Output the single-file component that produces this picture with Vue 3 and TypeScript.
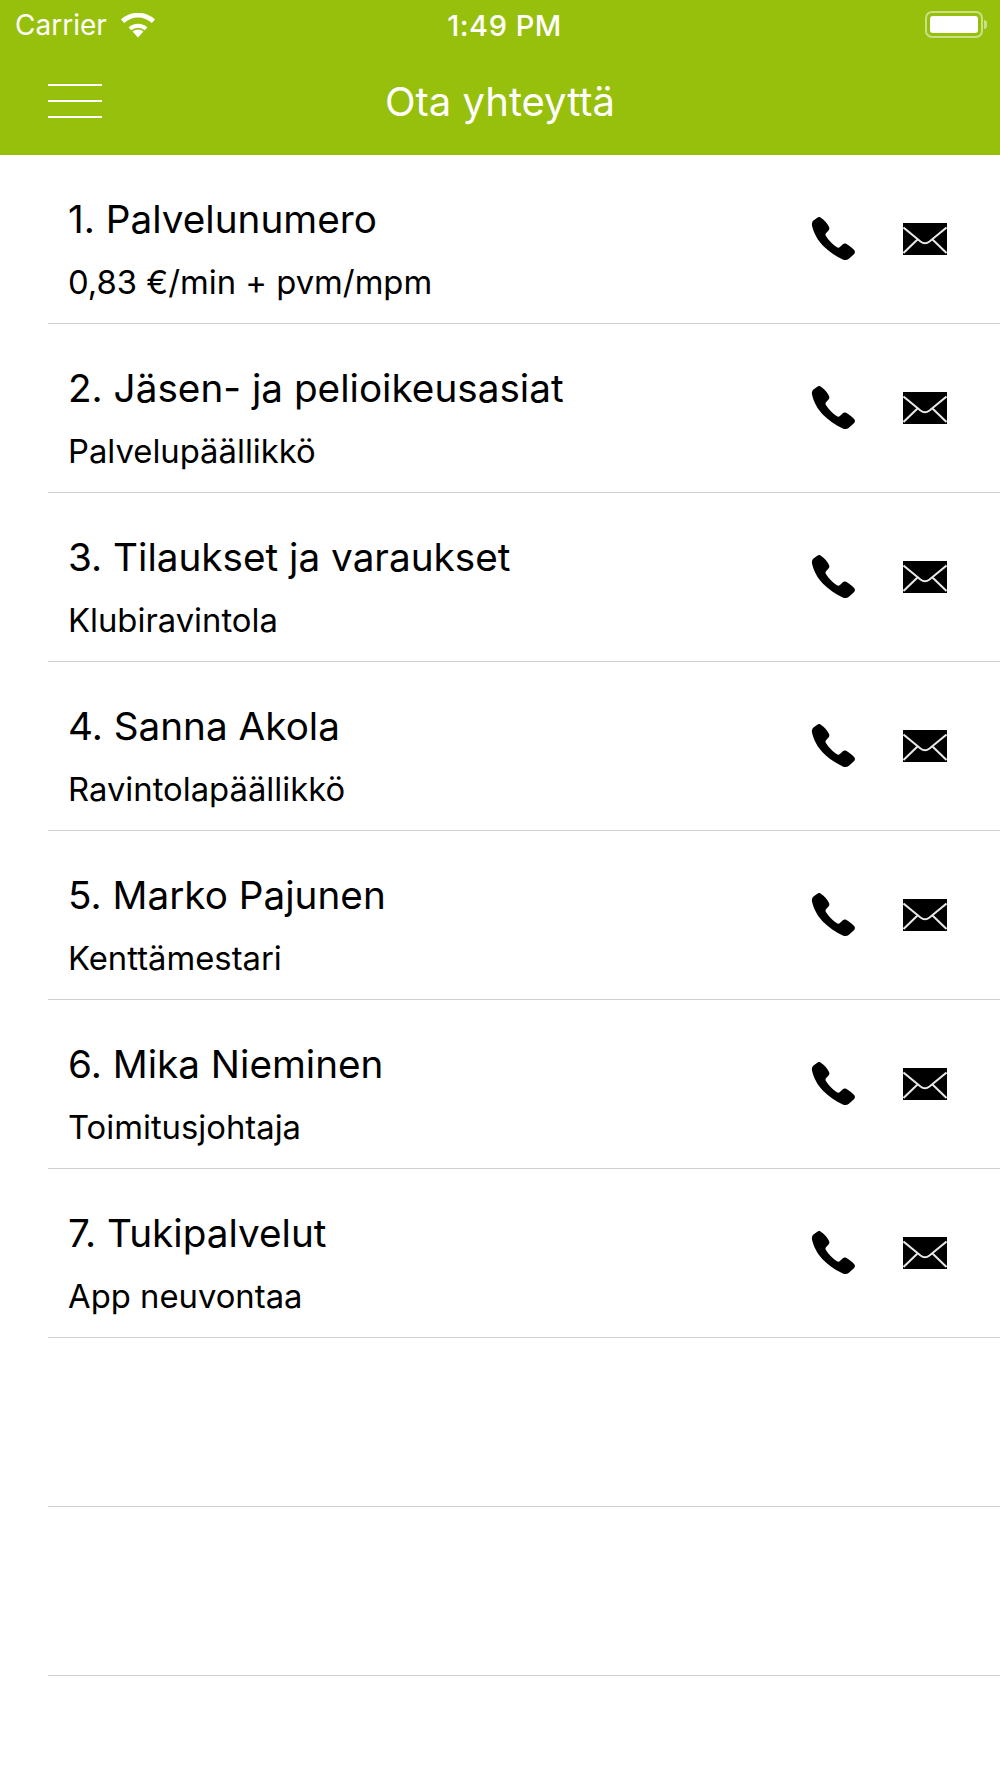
<script setup lang="ts">
interface Contact {
  title: string
  subtitle: string
}

const contacts: Contact[] = [
  { title: '1. Palvelunumero', subtitle: '0,83 €/min + pvm/mpm' },
  { title: '2. Jäsen- ja pelioikeusasiat', subtitle: 'Palvelupäällikkö' },
  { title: '3. Tilaukset ja varaukset', subtitle: 'Klubiravintola' },
  { title: '4. Sanna Akola', subtitle: 'Ravintolapäällikkö' },
  { title: '5. Marko Pajunen', subtitle: 'Kenttämestari' },
  { title: '6. Mika Nieminen', subtitle: 'Toimitusjohtaja' },
  { title: '7. Tukipalvelut', subtitle: 'App neuvontaa' },
]

const emptyRows = 2
</script>

<template>
  <div class="screen">
    <header class="header">
      <div class="status-bar">
        <div class="status-left">
          <span class="carrier">Carrier</span>
          <svg class="wifi" width="34" height="25" viewBox="0 0 34 25">
            <path d="M17 24.5 11.6 18.6a8 8 0 0 1 10.8 0Z" fill="#fff" />
            <path d="M7.6 14.4a13.6 13.6 0 0 1 18.8 0L23.7 17.3a9.8 9.8 0 0 0-13.4 0Z" fill="#fff" />
            <path d="M0 6.6A24.6 24.6 0 0 1 34 6.6L30.8 10a20 20 0 0 0-27.6 0Z" fill="#fff" />
          </svg>
        </div>
        <span class="clock">1:49 PM</span>
        <div class="battery">
          <div class="battery-body"><div class="battery-fill"></div></div>
          <div class="battery-cap"></div>
        </div>
      </div>
      <div class="nav-bar">
        <div class="menu">
          <span></span>
          <span></span>
          <span></span>
        </div>
        <h1 class="nav-title">Ota yhteyttä</h1>
      </div>
    </header>

    <ul class="list">
      <li v-for="item in contacts" :key="item.title" class="row">
        <div class="texts">
          <p class="title">{{ item.title }}</p>
          <small class="subtitle">{{ item.subtitle }}</small>
        </div>
        <div class="actions">
          <svg class="phone" width="46" height="46" viewBox="0 0 46 46">
            <path d="M9.5 1.5c-1-.6-2.2-.5-3.2.2L2.8 4.3C1.2 5.6.6 7.4 1 9.4c1.6 7.6 5.6 14.600 11 20.300 5.700 5.700 12.500 10.300 19.800 13.800 2.200 1 4.400.7 6.100-.8l5-4.400c1.300-1.200 1.400-2.900.2-4.200-2.200-2.300-5-4.500-7.600-6-1.400-.8-2.800-.6-3.900.4l-2.700 2.600c-.9.8-2 .9-3 .2-4.200-3.100-8.200-7.100-11-11.400-.7-1-.5-2 .3-2.900l2.300-2.500c1-1.100 1.100-2.500.4-3.800C16.300 7.300 13.300 3.800 9.500 1.500Z" fill="#000" />
          </svg>
          <svg class="mail" width="44" height="32" viewBox="0 0 44 32">
            <rect width="44" height="32" fill="#000" />
            <path d="M0.500 4.500 17.500 18.500Q22 22 26.500 18.500L43.500 4.500M0.500 30 14.500 16.500M43.500 30 29.500 16.500" fill="none" stroke="#e8e8e8" stroke-width="2" />
          </svg>
        </div>
      </li>
      <li v-for="n in emptyRows" :key="n" class="row"></li>
    </ul>
  </div>
</template>

<style>
html,
body {
  margin: 0;
  background: #fff;
}
</style>

<style scoped>
.screen {
  width: 1000px;
  height: 1778px;
  overflow: hidden;
  background: #fff;
  font-family: Inter, "Liberation Sans", sans-serif;
  color: #000;
}

.header {
  background: #97c00c;
  height: 155px;
  color: #fff;
}

.status-bar {
  height: 50px;
  display: grid;
  grid-template-columns: 1fr auto 1fr;
  align-items: center;
  padding: 0 13px 0 15px;
}

.status-left {
  display: flex;
  align-items: center;
  gap: 14px;
}

.carrier {
  font-size: 28px;
}

.clock {
  margin-left: 7px;
  font-size: 29px;
  font-weight: 500;
  letter-spacing: 0.5px;
}

.battery {
  justify-self: end;
  display: flex;
  align-items: center;
  gap: 1px;
  margin-bottom: 1px;
}

.battery-body {
  width: 58px;
  height: 27px;
  box-sizing: border-box;
  border: 2px solid rgba(255, 255, 255, 0.5);
  border-radius: 7px;
  padding: 3px;
}

.battery-fill {
  height: 100%;
  background: #fff;
  border-radius: 3px;
}

.battery-cap {
  width: 3px;
  height: 9px;
  background: rgba(255, 255, 255, 0.5);
  border-radius: 0 3px 3px 0;
}

.nav-bar {
  height: 105px;
  position: relative;
  display: flex;
  align-items: center;
  justify-content: center;
}

.menu {
  position: absolute;
  left: 48px;
  top: 34px;
  width: 54px;
  display: flex;
  flex-direction: column;
  gap: 14px;
}

.menu span {
  height: 2px;
  background: #fff;
}

.nav-title {
  margin: 0 0 2px;
  font-size: 40px;
  font-weight: 400;
}

.list {
  list-style: none;
  margin: 0;
  padding: 0 0 0 48px;
}

.row {
  height: 169px;
  box-sizing: border-box;
  border-bottom: 1px solid #d0d0d0;
  display: flex;
  justify-content: space-between;
  padding: 0 53px 0 20px;
}

.texts {
  display: flex;
  flex-direction: column;
  padding-top: 41px;
}

.title {
  margin: 0;
  font-size: 38.700px;
  line-height: 46px;
}

.subtitle {
  margin-top: 22px;
  font-size: 32.800px;
  line-height: 36px;
}

.actions {
  display: flex;
  align-items: center;
  gap: 46px;
  height: 168px;
}
</style>
